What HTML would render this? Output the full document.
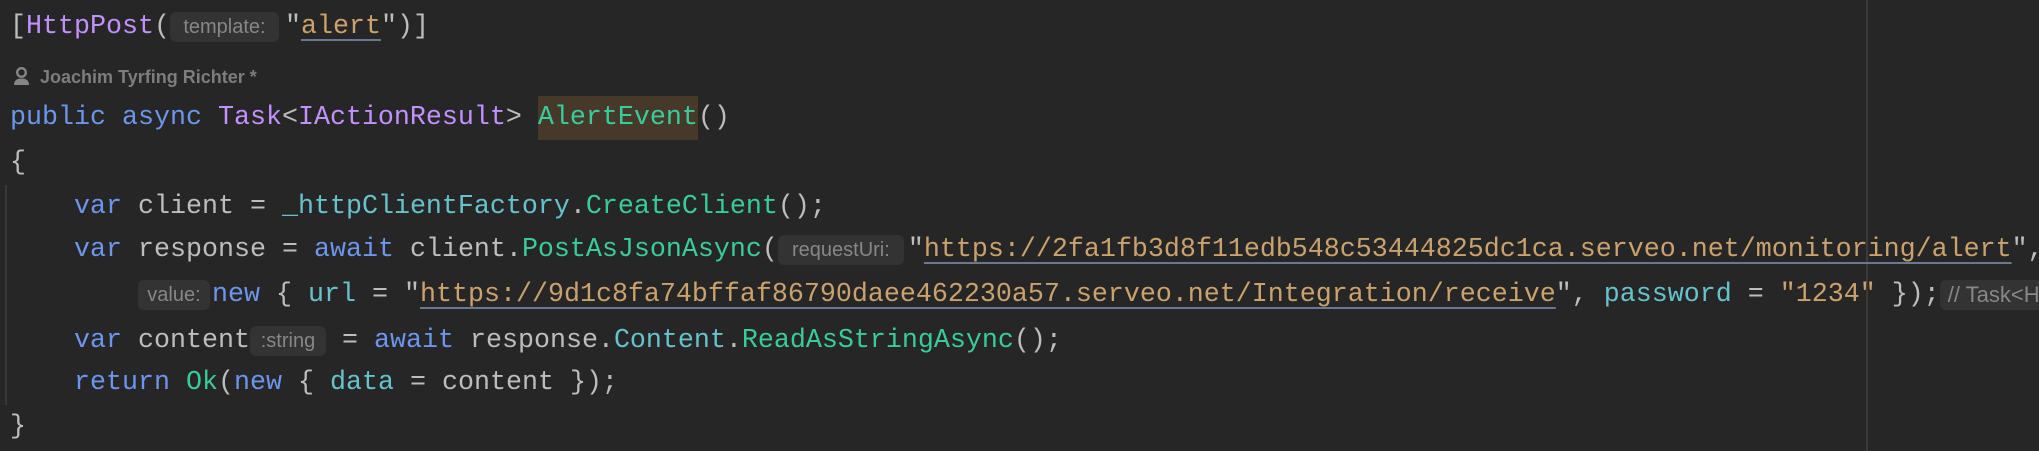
<!DOCTYPE html>
<html><head><meta charset="utf-8">
<style>
html,body{margin:0;padding:0;}
body{width:2039px;height:451px;background:#262626;position:relative;overflow:hidden;}
.l{position:absolute;left:10px;width:2029px;overflow:hidden;white-space:pre;font-family:"Liberation Mono",monospace;font-size:26.67px;height:44px;line-height:44px;color:#bdbdbd;}
.k{color:#6c95eb}.t{color:#c191ff}.m{color:#39cc9b}.f{color:#66c3cc}.s{color:#c9a26d}.p{color:#bdbdbd}
.u{text-decoration:underline;text-decoration-color:#6b7891;text-decoration-thickness:2px;text-underline-offset:6px}
.h{display:inline-block;vertical-align:top;margin-top:7px;height:30px;line-height:30px;background:#333333;border-radius:6px;color:#878787;font-family:"Liberation Sans",sans-serif;font-size:20px;text-align:center;}
.hl{background:#46392a;display:inline-block;height:44px;}
.guide{position:absolute;left:5px;top:185px;width:2px;height:220px;background:#383838;}
.vline{position:absolute;left:1866px;top:0;width:2px;height:451px;background:#3a3a3a;}
</style></head><body>
<div class="vline"></div>
<div class="guide"></div>
<div class="l" style="top:5px"><span class="p">[</span><span class="t">HttpPost</span><span class="p">(</span><span class="h" style="width:109px">template:</span><span class="p" style="margin-left:6px">"</span><span class="s u">alert</span><span class="p">")]</span></div>
<div style="position:absolute;left:13px;top:64px;height:26px;">
<svg width="17" height="22" viewBox="0 0 17 22" style="position:absolute;left:0;top:2px"><circle cx="8.5" cy="6.5" r="4.3" fill="none" stroke="#858585" stroke-width="2.4"/><path d="M1 19 Q1 12.5 8.5 12.5 Q16 12.5 16 19 Z" fill="#858585"/></svg>
<span style="position:absolute;left:27px;top:0;white-space:pre;font-family:'Liberation Sans',sans-serif;font-weight:bold;font-size:18px;line-height:26px;color:#7d7d7d">Joachim Tyrfing Richter *</span></div>
<div class="l" style="top:96px"><span class="k">public async </span><span class="t">Task</span><span class="p">&lt;</span><span class="t">IActionResult</span><span class="p">&gt; </span><span class="hl"><span class="m">AlertEvent</span></span><span class="p">()</span></div>
<div class="l" style="top:141px">{</div>
<div class="l" style="top:185px">    <span class="k">var</span> client = <span class="f">_httpClientFactory</span>.<span class="m">CreateClient</span>();</div>
<div class="l" style="top:228px">    <span class="k">var</span> response = <span class="k">await</span> client.<span class="m">PostAsJsonAsync</span>(<span class="h" style="width:126px">requestUri:</span><span style="margin-left:4px">"</span><span class="s u">https://2fa1fb3d8f11edb548c53444825dc1ca.serveo.net/monitoring/alert</span>",</div>
<div class="l" style="top:273px">        <span class="h" style="width:72px;margin-left:0">value:</span><span class="k" style="margin-left:2px">new</span> { <span class="f">url</span> = "<span class="s u">https://9d1c8fa74bffaf86790daee462230a57.serveo.net/Integration/receive</span>", <span class="f">password</span> = <span class="s">"1234"</span> });<span class="h" style="width:120px;text-align:left;padding-left:8px;font-size:22px">// Task&lt;H</span></div>
<div class="l" style="top:319px">    <span class="k">var</span> content<span class="h" style="width:76px">:string</span> = <span class="k">await</span> response.<span class="f">Content</span>.<span class="m">ReadAsStringAsync</span>();</div>
<div class="l" style="top:361px">    <span class="k">return</span> <span class="m">Ok</span>(<span class="k">new</span> { <span class="f">data</span> = content });</div>
<div class="l" style="top:405px">}</div>
</body></html>
